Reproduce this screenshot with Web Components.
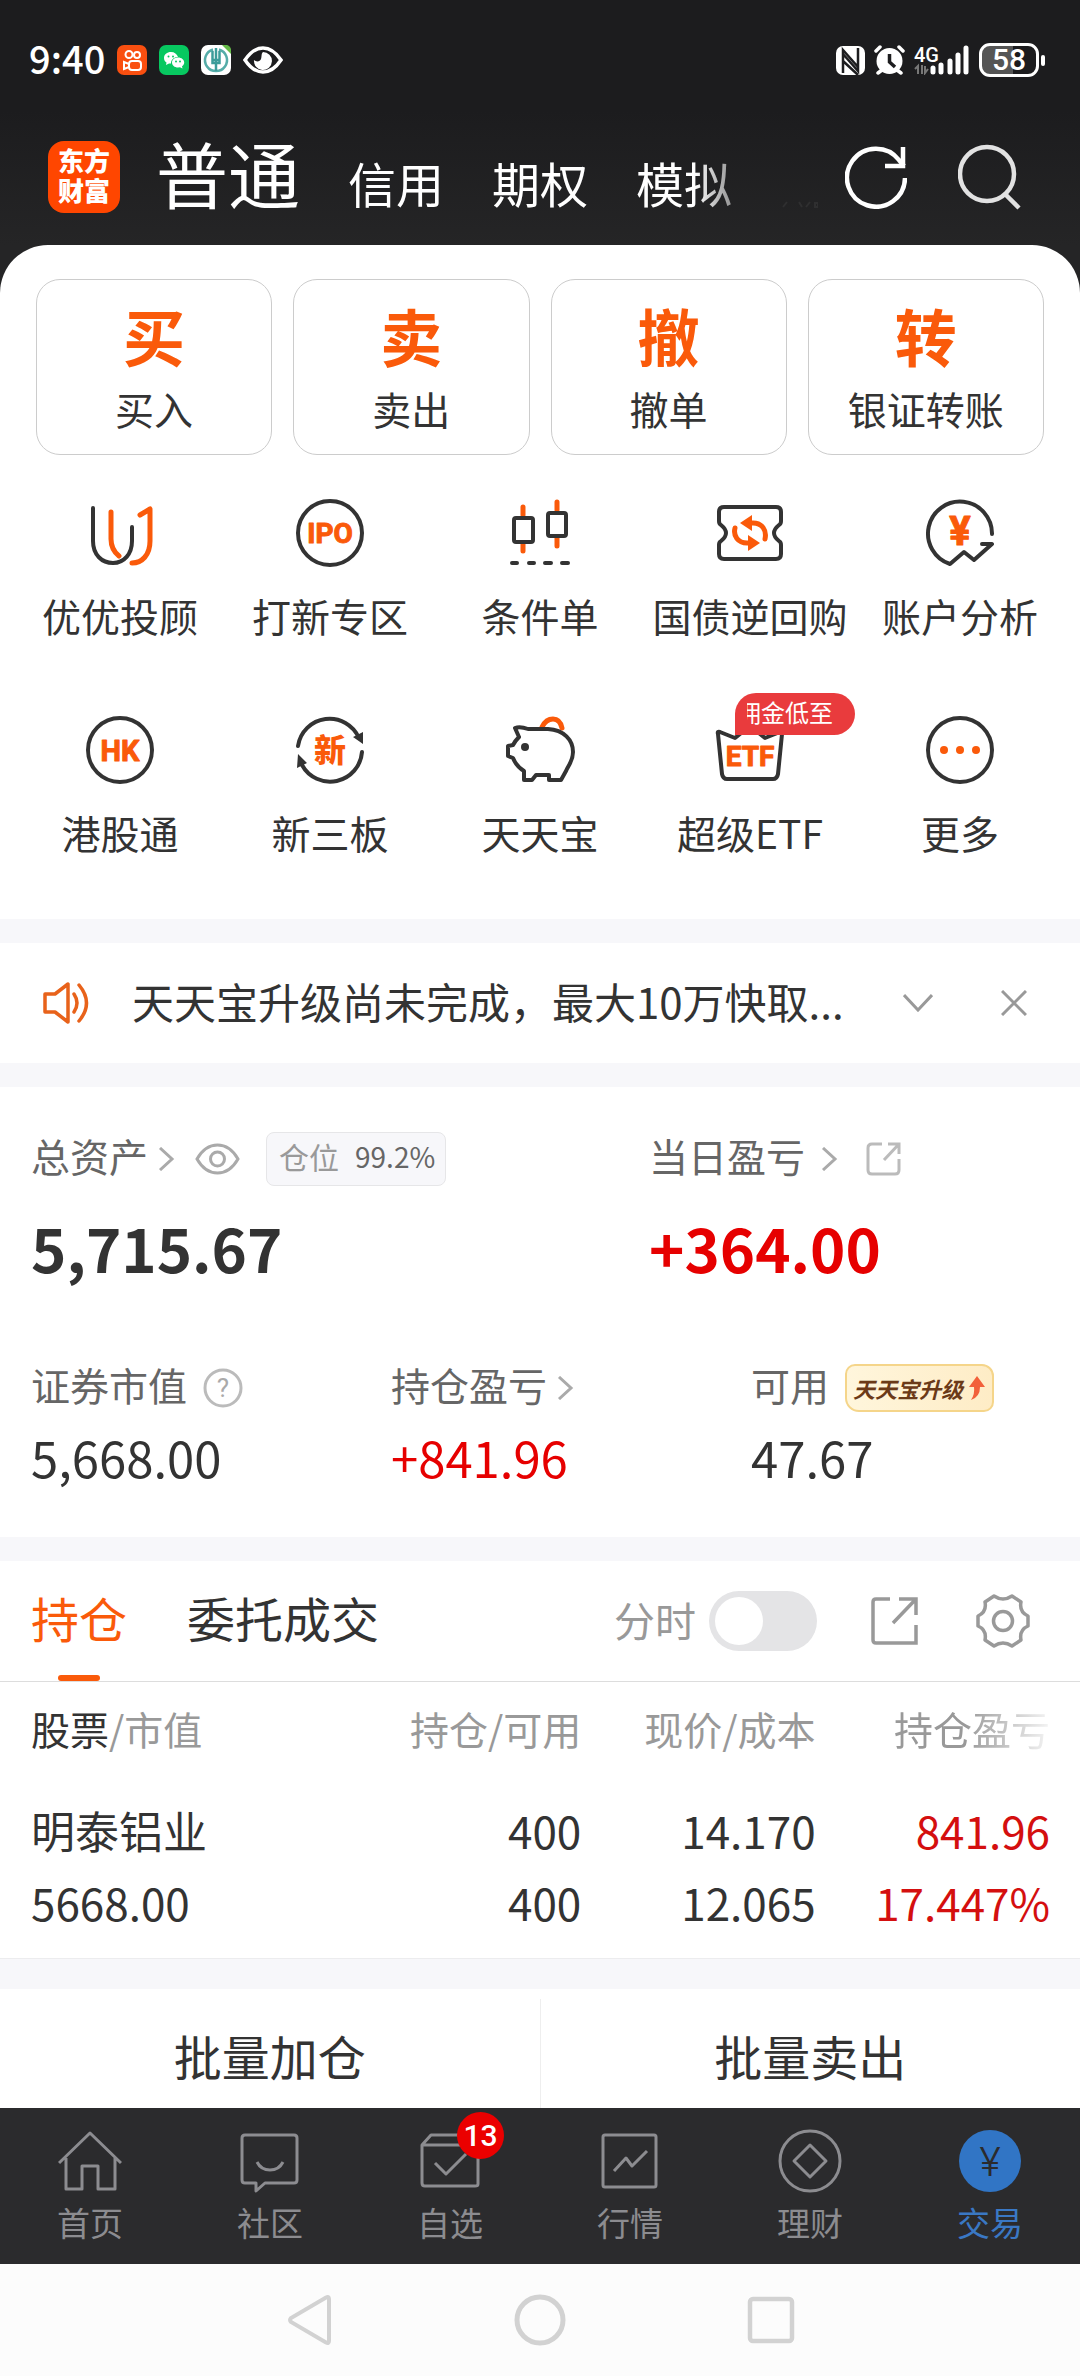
<!DOCTYPE html>
<html lang="zh-CN">
<head>
<meta charset="utf-8">
<meta name="viewport" content="width=device-width, initial-scale=1">
<title>普通交易</title>
<style>
html,body{margin:0}
body{font-family:"Noto Sans CJK SC","Noto Sans",sans-serif;color:#333;background:#fcfcfc;
  --orange:#fa5a0a;--red:#e60000;--ink:#333;--grey:#999;--band:#f7f7fa}
</style>
</head>
<body>
<trade-app></trade-app>
<script>
const RESET = `:host,*{box-sizing:border-box}
button{font:inherit;color:inherit;background:none;border:0;margin:0;padding:0;display:block}
a{color:inherit;text-decoration:none}
svg{display:block;flex:none;fill:none}`;

function define(name, css, html) {
  const tpl = document.createElement('template');
  tpl.innerHTML = `<style>${RESET}${css}</style>${html}`;
  customElements.define(name, class extends HTMLElement {
    constructor() {
      super();
      this.attachShadow({mode: 'open'}).append(tpl.content.cloneNode(true));
    }
  });
}

/* Phone status bar */
define('status-bar', `
:host{display:flex;align-items:center;justify-content:space-between;padding:40px 35px 39px 29px;height:119px;color:#fff}
.side{display:flex;align-items:center;gap:12px}
.right{gap:9px}
time{font-size:38px;line-height:40px;padding-bottom:4px;font-weight:500}
.net{font-size:20px;line-height:20px;font-weight:500;font-family:Roboto,sans-serif}
.cell{display:grid}
.cell>*{grid-area:1/1}
.bat{display:flex;align-items:center;gap:2px}
.box{width:60px;height:34px;border:3px solid #fff;border-radius:11px;display:flex;align-items:center;justify-content:center;
 font:500 30px/28px Roboto,sans-serif;background:linear-gradient(90deg,#555 58%,transparent 58%)}
.nub{width:4px;height:11px;border-radius:2px;background:#fff}
`, `
<div class="side">
 <time>9:40</time>
 <svg width="30" height="30" viewBox="0 0 30 30"><rect width="30" height="30" rx="7" fill="#f94f10"/><g stroke="#fff" stroke-width="2"><circle cx="12" cy="9.500" r="3.500"/><circle cx="20" cy="10" r="3"/><rect x="12" y="16" width="12" height="9" rx="3"/><path d="M12 19L7 17V24L12 22"/></g></svg>
 <svg width="30" height="30" viewBox="0 0 30 30"><rect width="30" height="30" rx="7" fill="#07c860"/><path d="M12 7c-4 0-7 2.500-7 6 0 2 1 3.500 2.500 4.500L7 20l3-1.500h2c0-4 3-6.500 7-6.500C18 9 15.500 7 12 7z" fill="#fff"/><path d="M19 12.500c-3.500 0-6 2.200-6 5s2.500 5 6 5l2-.3 2.500 1.300-.5-2.200c1.500-1 2.200-2.300 2.200-3.800 0-2.800-2.700-5-6.200-5z" fill="#fff"/><g fill="#07c860"><circle cx="9.500" cy="11.500" r="1"/><circle cx="14" cy="11.500" r="1"/><circle cx="17" cy="16.500" r="1"/><circle cx="21" cy="16.500" r="1"/></g></svg>
 <svg width="30" height="30" viewBox="0 0 30 30"><rect width="30" height="30" rx="7" fill="#fff"/><path d="M21 0h4a5 5 0 0 1 5 5v4z" fill="#63b946"/><path d="M12 4.500A11 11 0 1 0 18 4.500" stroke="#55aca8" stroke-width="2.500"/><path d="M15 3V26M11.500 6V15H18.500V6M11.500 15V18H18.500V15" stroke="#3c9c9a" stroke-width="2.500"/></svg>
 <svg width="40" height="28" viewBox="0 0 40 28"><path d="M2 14Q10 2 20 2T38 14Q30 26 20 26T2 14Z" stroke="#fff" stroke-width="3.500"/><path d="M20 6a9 9 0 1 1-9 8c2 2 6 2 7-1s0-5 2-7z" fill="#fff"/></svg>
</div>
<div class="side right">
 <svg width="29" height="29" viewBox="0 0 29 29"><rect x="0" y="0" width="29" height="29" rx="7" fill="#fff"/><path d="M7 27V4L22 21M22 2V25L7 8M7 15L22 29" stroke="#1d1d1f" stroke-width="2.500"/></svg>
 <svg width="31" height="30" viewBox="0 0 31 30"><circle cx="15.500" cy="16" r="13" fill="#fff"/><path d="M15.500 9V17L21 22" stroke="#1d1d1f" stroke-width="3.500"/><path d="M2 6L6 2M29 6L25 2M4 28L8 25M27 28L23 25" stroke="#fff" stroke-width="3.500" stroke-linecap="round"/></svg>
 <div class="cell"><span class="net">4G</span><svg width="56" height="30" viewBox="0 0 56 30"><path d="M4 29V21L1 24M8 20V29M11 21V28L14 24" stroke="#777" stroke-width="2"/><g stroke="#fff" stroke-width="5" stroke-linecap="round"><path d="M19 23V27M27 20V27M36 16V27M44 10V27M52 3V27"/></g></svg></div>
 <div class="bat"><div class="box">58</div><div class="nub"></div></div>
</div>`);

/* Account-type tabs with the brand mark */
define('account-header', `
:host{display:flex;align-items:center;height:126px;padding:0 59px 10px 48px;color:#fff}
.logo{width:72px;height:72px;border-radius:16px;background:#ff4600;font-size:26px;line-height:30px;font-weight:900;text-align:center;padding:4px 0 8px}
nav{flex:1;min-width:0;display:flex;align-items:baseline;gap:48px;margin-left:36px;align-self:flex-start;overflow:hidden;white-space:nowrap;
 -webkit-mask:linear-gradient(to left,transparent 10px,#000 88px);mask:linear-gradient(to left,transparent 10px,#000 88px)}
nav button{font-size:48px;line-height:80px;flex:none}
nav .on{font-size:72px;line-height:106px}
.peek{align-self:flex-end;margin-bottom:27px}
.refresh{margin:0 51px 0 27px}
`, `
<div class="logo">东方<br>财富</div>
<nav><button class="on">普通</button><button>信用</button><button>期权</button><button>模拟</button></nav>
<svg class="peek" width="36" height="7"><path d="M1 6L5 1M17 1L20 6M24 6L28 1M33 2H36V6H33Z" stroke="#2f2f30" stroke-width="2"/></svg>
<button class="refresh" aria-label="刷新"><svg width="62" height="64" viewBox="0 0 62 64"><path d="M60 33A29 29 0 1 1 54 15L59 21" stroke="#fff" stroke-width="4.500"/><path d="M58 2V21H40" stroke="#fff" stroke-width="4.500"/></svg></button>
<button aria-label="搜索"><svg width="63" height="66" viewBox="0 0 63 66"><circle cx="29" cy="30" r="27" stroke="#e2e2e2" stroke-width="4.500"/><path d="M47 50L61 64" stroke="#e2e2e2" stroke-width="4.500"/></svg></button>`);

/* Outlined primary action */
define('trade-card', `
:host{display:block;flex:1;min-width:0}
button{width:100%;height:176px;border:1px solid #ccc;border-radius:24px;padding:19px 0 18px;text-align:center}
.mark{display:block;font-size:62px;line-height:72px;font-weight:700;color:var(--orange)}
.label{display:block;font-size:39px;line-height:56px;margin-top:9px;color:var(--ink)}
`, `<button><span class="mark"><slot name="mark"></slot></span><span class="label"><slot></slot></span></button>`);

/* Icon shortcut; the icon comes through a slot */
define('quick-item', `
:host{display:block;min-width:0}
a{display:flex;flex-direction:column;align-items:center;gap:18px;position:relative;font-size:39px;line-height:56px;white-space:nowrap;color:var(--ink)}
::slotted(svg){display:block;width:72px;height:72px;fill:none;overflow:visible}
::slotted([slot=tip]){position:absolute;left:calc(50% - 15px);top:-21px;width:120px;height:42px;border-radius:21px 21px 21px 0;background:#e93b3d;
 display:flex}
`, `<a href="#"><slot name="icon"></slot><span><slot></slot></span><slot name="tip"></slot></a>`);

/* Scrolling caption inside a tip bubble */
define('tip-text', `
:host{display:flex;padding-left:12px}
span{display:flex;justify-content:flex-end;width:86px;overflow:hidden;white-space:nowrap;color:#fff;font-size:24px;line-height:38px}
`, `<span><slot></slot></span>`);

const K = 'stroke="#333" stroke-width="4" stroke-linecap="round" stroke-linejoin="round"';
const O = 'stroke="#fa5a0a" stroke-width="5" stroke-linecap="round" stroke-linejoin="round"';
const T = 'fill="#fa5a0a" stroke="#fa5a0a" stroke-linejoin="round" text-anchor="middle" font-family="Roboto,sans-serif" font-weight="700"';
const ic = inner => `<svg slot="icon" viewBox="0 0 72 72">${inner}</svg>`;

define('action-panel', `
:host{display:block;background:#fff;border-radius:48px 48px 0 0;padding:34px 0 59px}
.cards{display:flex;gap:21px;padding:0 36px}
.grid{display:grid;grid-template-columns:repeat(5,1fr);row-gap:71px;padding:42px 15px 0}
`, `
<div class="cards">
 <trade-card><span slot="mark">买</span>买入</trade-card>
 <trade-card><span slot="mark">卖</span>卖出</trade-card>
 <trade-card><span slot="mark">撤</span>撤单</trade-card>
 <trade-card><span slot="mark">转</span>银证转账</trade-card>
</div>
<div class="grid">
 <quick-item>${ic(`<path ${K} d="M9 11V44C9 58 18 66 29 66S48 57 48 44V30"/><path ${O} d="M27 15V42C27 50 30 55 35 59M56 18L66 12V44C66 58 58 66 48 66"/>`)}优优投顾</quick-item>
 <quick-item>${ic(`<circle ${K} cx="36" cy="36" r="32"/><text ${T} x="36" y="46" font-size="28" stroke-width="1">IPO</text>`)}打新专区</quick-item>
 <quick-item>${ic(`<path ${O} d="M19 10V18M19 46V54M53 5V13M53 41V49"/><rect ${K} x="10" y="21" width="19" height="24" rx="2"/><rect ${K} x="44" y="16" width="18" height="23" rx="2"/><path ${K} d="M8 66H13M25 66H30M41 66H47M58 66H64"/>`)}条件单</quick-item>
 <quick-item>${ic(`<path ${K} d="M10 10H62Q67 10 67 15V24Q67 27 65 28Q60 32 60 36T65 44Q67 45 67 48V57Q67 62 62 62H10Q5 62 5 57V48Q5 45 7 44Q12 40 12 36T7 28Q5 27 5 24V15Q5 10 10 10Z"/><path ${O} d="M51 42C53 33 48 26 39 26H35M21 31C19 39 24 46 33 46H37"/><path fill="#fa5a0a" d="M26 26L38 18V34ZM46 46L34 38V54Z"/>`)}国债逆回购</quick-item>
 <quick-item>${ic(`<path ${K} d="M68 37A32 32 0 1 0 26 67L40 55L50 63L68 47H58"/><text ${T} x="36" y="48" font-size="40" stroke-width="1">¥</text>`)}账户分析</quick-item>
 <quick-item>${ic(`<circle ${K} cx="36" cy="36" r="32"/><text ${T} x="36" y="47" font-size="29" stroke-width="1">HK</text>`)}港股通</quick-item>
 <quick-item>${ic(`<path ${K} d="M4 32A32 32 0 0 1 65 24M68 38A32 32 0 0 1 8 51"/><path fill="#333" d="M59 23L69 18L69 30ZM13 49L3 54L4 40Z"/><text x="36" y="48" text-anchor="middle" font-size="32" font-weight="900" fill="#fa5a0a">新</text>`)}新三板</quick-item>
 <quick-item>${ic(`<path ${O} d="M38 13Q42 5 49 5T58 14"/><path ${K} d="M15 23L11 14Q16 12 24 15H44C60 16 69 26 69 38C69 47 64 52 62 57L57 66H45V61H32L28 66H20V57C15 54 11 49 9 44L4 42V32L9 31Q11 27 15 23"/><circle cx="21" cy="33" r="4" fill="#333"/>`)}天天宝</quick-item>
 <quick-item>${ic(`<path ${K} d="M6 18L21 24L36 12L51 24L66 18Q69 17 68 20L64 60Q63 65 59 65H13Q9 65 8 60L4 20Q3 17 6 18Z"/><text ${T} x="36" y="52" font-size="28" stroke-width="1">ETF</text>`)}超级ETF<tip-text slot="tip">佣金低至</tip-text></quick-item>
 <quick-item>${ic(`<circle ${K} cx="36" cy="36" r="32"/><g fill="#fa5a0a"><circle cx="20" cy="36" r="4"/><circle cx="36" cy="36" r="4"/><circle cx="52" cy="36" r="4"/></g>`)}更多</quick-item>
</div>`);

define('notice-bar', `
:host{display:flex;align-items:center;height:120px;padding:0 53px 0 42px;background:#fff;color:var(--ink)}
a{flex:1;min-width:0;margin-left:42px;font-size:42px;line-height:60px;padding-bottom:4px;white-space:nowrap}
.fold{margin-right:68px}
`, `
<svg width="48" height="44" viewBox="0 0 48 44"><path d="M3 13H13L26 3V41L13 31H3ZM32 13Q38 22 32 31M37 4Q52 22 37 40" stroke="#e8621a" stroke-width="3.500" stroke-linejoin="round" stroke-linecap="round"/></svg>
<a href="#">天天宝升级尚未完成，最大10万快取...</a>
<button class="fold" aria-label="展开"><svg width="30" height="18" viewBox="0 0 30 18"><path d="M1 1L15 16L29 1" stroke="#999" stroke-width="3"/></svg></button>
<button aria-label="关闭"><svg width="26" height="26" viewBox="0 0 26 26"><path d="M1 1L25 25M25 1L1 25" stroke="#999" stroke-width="3"/></svg></button>`);

/* One figure: a label row with its extras, and the value below */
define('asset-figure', `
:host{display:block;padding-left:31px;min-width:0}
.row{display:flex;align-items:center;height:48px;white-space:nowrap}
.name{font-size:39px;line-height:48px;padding-bottom:8px;color:#666}
.value{font-size:49px;line-height:60px;margin-top:15px;color:var(--ink)}
:host([main]) .row{height:54px}
:host([main]) .value{font-size:60px;line-height:72px;font-weight:700;margin-top:25px}
:host([gain]) .value{color:var(--red)}
::slotted(*){flex:none}
`, `<div class="row"><span class="name"><slot name="name"></slot></span><slot name="extra"></slot></div><div class="value"><slot></slot></div>`);

const chev = cls => `<svg class="${cls}" slot="extra" width="17" height="24" viewBox="0 0 17 24"><path d="M2 1L14 12L2 23" stroke="#aaa" stroke-width="3"/></svg>`;
define('asset-overview', `
:host{display:block;background:#fff;padding:45px 0 50px}
.top{display:grid;grid-template-columns:618fr 462fr}
.low{display:grid;grid-template-columns:repeat(3,1fr);margin-top:81px}
.chev{margin-left:10px}
.wide{margin-left:16px}
.eye{margin-left:20px}
.chip{margin-left:26px;height:54px;border:1px solid #e6e6e8;border-radius:8px;background:#f7f7fa;padding:0 10px 6px 12px;display:flex;gap:16px;font-size:30px;line-height:46px;color:#999}
.chip b{font-weight:400;font-size:28px;color:#666}
.out{margin-left:28px}
.help{margin-left:16px}
.up{margin-left:16px}
.up button{display:flex;align-items:center;gap:2px;width:149px;height:48px;border:2px solid #f5d58a;border-radius:10px 12px 10px 14px;background:linear-gradient(90deg,#fff6dc,#feecc6);
 padding-left:6px;font:italic 700 22px/36px "Noto Sans CJK SC",sans-serif;color:#6b3a18;white-space:nowrap}
`, `
<div class="top">
 <asset-figure main><span slot="name">总资产</span>${chev('chev')}
  <svg class="eye" slot="extra" width="45" height="32" viewBox="0 0 45 32"><path d="M2 16Q10 2 22.500 2T43 16Q35 30 22.500 30T2 16Z" stroke="#aaa" stroke-width="3"/><circle cx="22.500" cy="16" r="7" stroke="#aaa" stroke-width="3"/></svg>
  <span class="chip" slot="extra">仓位<b>99.2%</b></span>5,715.67</asset-figure>
 <asset-figure main gain><span slot="name">当日盈亏</span>${chev('wide')}
  <svg class="out" slot="extra" width="36" height="34" viewBox="0 0 36 34"><path d="M16 2H6Q2 2 2 6V28Q2 32 6 32H29Q33 32 33 28V17M22 2H33V12M33 2L18 18" stroke="#bbb" stroke-width="3"/></svg>+364.00</asset-figure>
</div>
<div class="low">
 <asset-figure><span slot="name">证券市值</span>
  <svg class="help" slot="extra" width="40" height="40" viewBox="0 0 40 40"><circle cx="20" cy="20" r="18" stroke="#bbb" stroke-width="3"/><text x="20" y="29" text-anchor="middle" font-size="26" font-family="Roboto,sans-serif" fill="#aaa">?</text></svg>5,668.00</asset-figure>
 <asset-figure gain><span slot="name">持仓盈亏</span>${chev('chev')}+841.96</asset-figure>
 <asset-figure><span slot="name">可用</span><span class="up" slot="extra"><button>天天宝升级<svg width="20" height="26" viewBox="0 0 20 26"><path d="M12 1L20 12H15Q15 22 6 25Q10 19 9 12H4Z" fill="#f2603a"/></svg></button></span>47.67</asset-figure>
</div>`);

/* Positions with their toolbar */
define('position-panel', `
:host{display:block;background:#fff;color:var(--ink)}
.bar{display:flex;align-items:center;height:121px;padding:0 50px 0 31px;border-bottom:1px solid #ddd}
.tab{font-size:48px;line-height:112px;padding-bottom:8px;height:120px;position:relative}
.tab+.tab{margin-left:60px}
.on{color:var(--orange)}
.on::after{content:"";position:absolute;left:calc(50% - 21px);bottom:0;width:42px;height:6px;border-radius:3px;background:var(--orange)}
label{margin-left:auto;display:flex;align-items:center;gap:13px;font-size:41px;color:var(--grey);line-height:56px}
label span{padding-bottom:5px}
input{appearance:none;-webkit-appearance:none;margin:0;width:108px;height:60px;border-radius:30px;background:#e4e4e6;padding:6px;display:flex}
input::before{content:"";width:48px;height:48px;border-radius:50%;background:#fff}
.out{margin:0 57px 0 54px}
.wrap{padding:0 30px 20px 31px}
table{width:100%;table-layout:fixed;border-collapse:collapse}
th,td{padding:0;text-align:right;font-weight:400;white-space:nowrap;width:23%}
th:first-child,td:first-child{width:31%;text-align:left}
th{font-size:39px;line-height:60px;height:92px;color:var(--grey)}
th b{font-weight:400;color:var(--ink)}
th:last-child span{-webkit-mask:linear-gradient(to left,rgba(0,0,0,.1),#000 85px);mask:linear-gradient(to left,rgba(0,0,0,.1),#000 85px);display:inline-block}
td{font-size:44px;line-height:72px;padding-top:20px}
td div{height:72px}
.gain{color:#d40f0f}
`, `
<div class="bar">
 <button class="tab on">持仓</button><button class="tab">委托成交</button>
 <label><span>分时</span><input type="checkbox" role="switch"></label>
 <button class="out" aria-label="导出"><svg width="48" height="48" viewBox="0 0 48 48"><path d="M19 2H5Q2 2 2 5V43Q2 46 5 46H45V28M28 2H45V18M45 2L22 26" stroke="#999" stroke-width="3.500"/></svg></button>
 <button aria-label="设置"><svg width="54" height="54" viewBox="0 0 54 54"><path d="M18 2Q27 8 36 2L45 8Q43 18 52 22V32Q43 36 45 46L36 52Q27 46 18 52L9 46Q11 36 2 32V22Q11 18 9 8Z" stroke="#999" stroke-width="3.500" stroke-linejoin="round"/><circle cx="27" cy="27" r="9.500" stroke="#999" stroke-width="3.500"/></svg></button>
</div>
<div class="wrap"><table>
 <thead><tr><th><b>股票</b>/市值</th><th>持仓/可用</th><th>现价/成本</th><th><span>持仓盈亏</span></th></tr></thead>
 <tbody><tr>
  <td><div>明泰铝业</div><div>5668.00</div></td>
  <td><div>400</div><div>400</div></td>
  <td><div>14.170</div><div>12.065</div></td>
  <td class="gain"><div>841.96</div><div>17.447%</div></td>
 </tr></tbody>
</table></div>`);

define('batch-bar', `
:host{display:flex;height:119px;background:#fff;color:var(--ink)}
button{flex:1;font-size:48px;line-height:106px;padding-top:13px}
i{width:1px;background:#eee;margin-top:10px}
`, `<button>批量加仓</button><i></i><button>批量卖出</button>`);

define('tab-item', `
:host{display:block;flex:1;color:#8c8c90}
:host([active]){color:#3a78c4}
a{display:flex;flex-direction:column;align-items:center;gap:7px;padding:21px 0 20px;position:relative;font-size:33px;line-height:44px}
::slotted(svg){display:block;width:64px;height:64px;fill:none}
::slotted([slot=badge]){position:absolute;left:calc(50% + 7px);top:4px;width:47px;height:47px;border-radius:50%;background:#eb0000;color:#fff;
 font:500 30px/47px Roboto,sans-serif;text-align:center}
`, `<a href="#"><slot name="icon"></slot><span><slot></slot></span><slot name="badge"></slot></a>`);

const N = 'stroke="#8c8c90" stroke-width="3" stroke-linejoin="round"';
const nv = inner => `<svg slot="icon" viewBox="0 0 64 64">${inner}</svg>`;
define('tab-bar', `:host{display:flex;background:#2b2b2d}`, `
<tab-item>${nv(`<path ${N} d="M1 34L32 4L63 34M8 29V60H24V37H40V60H57V29"/>`)}首页</tab-item>
<tab-item>${nv(`<path ${N} d="M7 6H56Q59 6 59 9V51Q59 54 56 54H27L18 62V54H7Q4 54 4 51V9Q4 6 7 6Z"/><path ${N} d="M19 33Q23 41 32 41T45 33"/>`)}社区</tab-item>
<tab-item>${nv(`<path ${N} d="M4 16L13 6H52L60 16M4 16H60V55Q60 57 57 57H7Q4 57 4 54ZM17 34L28 45L48 25"/>`)}自选<span slot="badge">13</span></tab-item>
<tab-item>${nv(`<rect ${N} x="5" y="6" width="53" height="52" rx="2"/><path ${N} d="M16 42L28 29L34 37L49 22"/>`)}行情</tab-item>
<tab-item>${nv(`<circle ${N} cx="32" cy="32" r="30"/><path ${N} d="M32 16L48 32L32 48L16 32Z"/>`)}理财</tab-item>
<tab-item active>${nv(`<circle cx="32" cy="32" r="31" fill="#3175c5"/><text x="32" y="47" text-anchor="middle" font-size="40" font-family="Inter,Roboto,sans-serif" font-weight="300" fill="#2b2b2d">¥</text>`)}交易</tab-item>`);

define('system-nav', `
:host{display:flex;justify-content:center;align-items:center;height:112px;background:#fcfcfc}
button{width:231px;display:flex;justify-content:center}
`, `
<button aria-label="返回"><svg width="44" height="52" viewBox="0 0 44 52"><path d="M39 3.500Q42 2 42 5V47Q42 50 39 48.500L4 28Q2 26 4 24Z" stroke="#d2d2d2" stroke-width="4"/></svg></button>
<button aria-label="主页"><svg width="52" height="52" viewBox="0 0 52 52"><circle cx="26" cy="26" r="23" stroke="#d2d2d2" stroke-width="5"/></svg></button>
<button aria-label="最近任务"><svg width="48" height="48" viewBox="0 0 48 48"><rect x="3" y="3" width="42" height="42" rx="3" stroke="#d2d2d2" stroke-width="4.500"/></svg></button>`);

define('trade-app', `
:host{display:block;background:var(--band)}
.head{background:linear-gradient(#1c1c1e 110px,#252526 245px)}
notice-bar,asset-overview,position-panel{margin-top:24px}
position-panel{border-bottom:1px solid #ececee}
batch-bar{margin-top:30px}
`, `
<div class="head"><status-bar></status-bar><account-header></account-header><action-panel></action-panel></div>
<notice-bar></notice-bar>
<asset-overview></asset-overview>
<position-panel></position-panel>
<batch-bar></batch-bar>
<tab-bar></tab-bar>
<system-nav></system-nav>`);
</script>
</body>
</html>
